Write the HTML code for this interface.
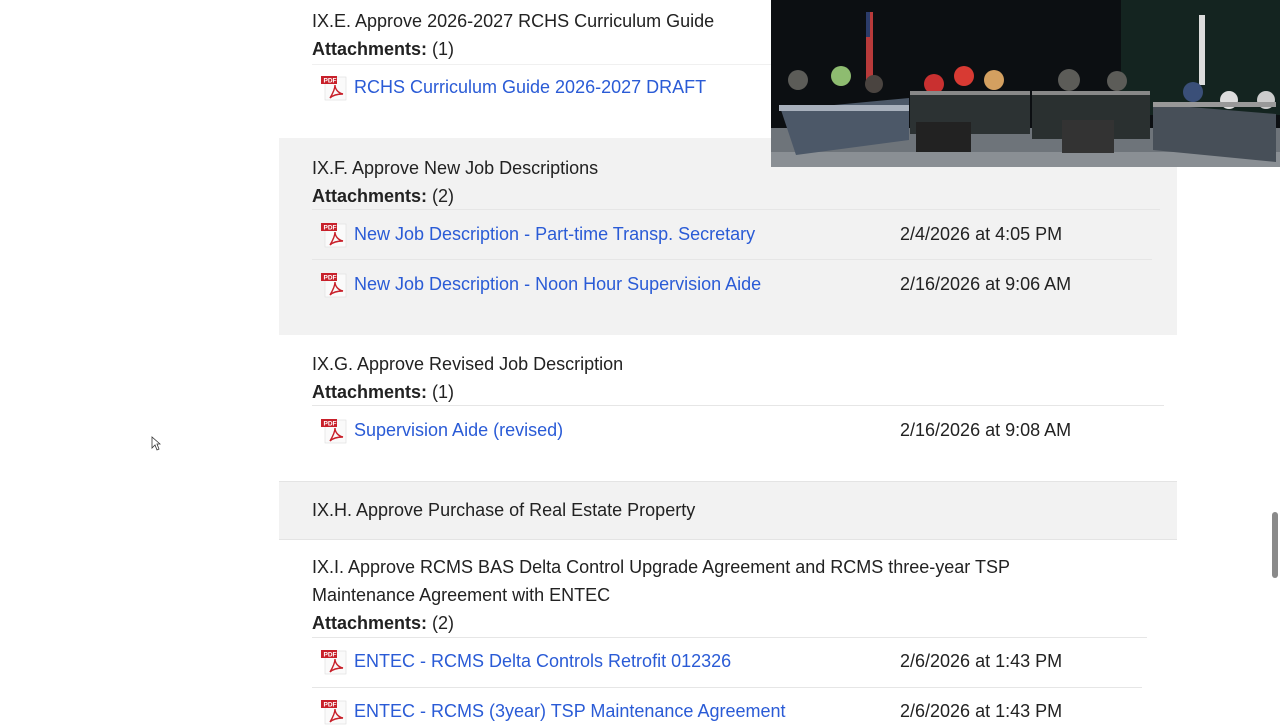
<!DOCTYPE html>
<html><head><meta charset="utf-8"><style>
body{margin:0;width:1280px;height:720px;overflow:hidden;background:#fff;font-family:"Liberation Sans",sans-serif;font-size:18px;color:#222;position:relative}
.t{position:absolute;line-height:28px;white-space:nowrap}
.a{color:#2a5bd6}
.b{font-weight:bold}
.g{position:absolute;left:279px;width:898px;background:#f2f2f2}
.l{position:absolute;height:1px;background:#e6e6e6;left:312px}
.p{position:absolute;left:321px;width:27px;height:26px}
</style></head><body>
<div class="g" style="top:138px;height:197px"></div>
<div class="g" style="top:481px;height:57px;border-top:1px solid #e4e4e4;border-bottom:1px solid #e4e4e4"></div>

<div class="l" style="top:64px;width:840px;background:#f0f0f0"></div>
<div class="l" style="top:209px;width:848px"></div>
<div class="l" style="top:259px;width:840px"></div>
<div class="l" style="top:405px;width:852px"></div>
<div class="l" style="top:637px;width:835px"></div>
<div class="l" style="top:687px;width:830px"></div>

<div class="t" style="left:312px;top:7px">IX.E. Approve 2026-2027 RCHS Curriculum Guide</div>
<div class="t" style="left:312px;top:35px"><span class="b">Attachments:</span> (1)</div>
<div class="t a" style="left:354px;top:73px">RCHS Curriculum Guide 2026-2027 DRAFT</div>

<div class="t" style="left:312px;top:154px">IX.F. Approve New Job Descriptions</div>
<div class="t" style="left:312px;top:182px"><span class="b">Attachments:</span> (2)</div>
<div class="t a" style="left:354px;top:220px">New Job Description - Part-time Transp. Secretary</div>
<div class="t" style="left:900px;top:220px">2/4/2026 at 4:05 PM</div>
<div class="t a" style="left:354px;top:270px">New Job Description - Noon Hour Supervision Aide</div>
<div class="t" style="left:900px;top:270px">2/16/2026 at 9:06 AM</div>

<div class="t" style="left:312px;top:350px">IX.G. Approve Revised Job Description</div>
<div class="t" style="left:312px;top:378px"><span class="b">Attachments:</span> (1)</div>
<div class="t a" style="left:354px;top:416px">Supervision Aide (revised)</div>
<div class="t" style="left:900px;top:416px">2/16/2026 at 9:08 AM</div>

<div class="t" style="left:312px;top:496px">IX.H. Approve Purchase of Real Estate Property</div>

<div class="t" style="left:312px;top:553px">IX.I. Approve RCMS BAS Delta Control Upgrade Agreement and RCMS three-year TSP</div>
<div class="t" style="left:312px;top:581px">Maintenance Agreement with ENTEC</div>
<div class="t" style="left:312px;top:609px"><span class="b">Attachments:</span> (2)</div>
<div class="t a" style="left:354px;top:647px">ENTEC - RCMS Delta Controls Retrofit 012326</div>
<div class="t" style="left:900px;top:647px">2/6/2026 at 1:43 PM</div>
<div class="t a" style="left:354px;top:697px">ENTEC - RCMS (3year) TSP Maintenance Agreement</div>
<div class="t" style="left:900px;top:697px">2/6/2026 at 1:43 PM</div>

<svg width="0" height="0" style="position:absolute"><defs><g id="pdf">
<rect x="4" y="2" width="21" height="23" fill="#fafafa" stroke="#ddd" stroke-width="0.6"/>
<rect x="0" y="1" width="16" height="8" fill="#c8202a"/>
<text x="2.5" y="7.5" font-size="6.5" fill="#fff" font-family="Liberation Sans" font-weight="bold">PDF</text>
<path d="M9 23 C12 18 14 14 14 10 C14 14 17 18 22 19 C17 19 12 20 9 23Z" fill="none" stroke="#c8202a" stroke-width="1.4"/>
</g></defs></svg>
<svg class="p" style="top:75px" viewBox="0 0 27 26"><use href="#pdf"/></svg>
<svg class="p" style="top:222px" viewBox="0 0 27 26"><use href="#pdf"/></svg>
<svg class="p" style="top:272px" viewBox="0 0 27 26"><use href="#pdf"/></svg>
<svg class="p" style="top:418px" viewBox="0 0 27 26"><use href="#pdf"/></svg>
<svg class="p" style="top:649px" viewBox="0 0 27 26"><use href="#pdf"/></svg>
<svg class="p" style="top:699px" viewBox="0 0 27 26"><use href="#pdf"/></svg>

<!-- video -->
<svg style="position:absolute;left:771px;top:0" width="509" height="167" viewBox="0 0 509 167">
<rect width="509" height="167" fill="#0c0f12"/>
<rect x="350" y="0" width="159" height="115" fill="#142420"/>
<rect x="0" y="128" width="509" height="39" fill="#6e747a"/>
<rect x="0" y="152" width="509" height="15" fill="#8a8f94"/>
<rect x="95" y="12" width="7" height="68" fill="#b83a3a"/>
<rect x="95" y="12" width="4" height="25" fill="#2c3c6a"/>
<rect x="428" y="15" width="6" height="70" fill="#dcdcdc"/>
<g fill="#5c5c58"><circle cx="27" cy="80" r="10"/><circle cx="70" cy="76" r="10" fill="#8ebc70"/><circle cx="103" cy="84" r="9" fill="#4a4440"/><circle cx="163" cy="84" r="10" fill="#c93030"/><circle cx="193" cy="76" r="10" fill="#d83a33"/><circle cx="223" cy="80" r="10" fill="#d4a060"/><circle cx="298" cy="80" r="11"/><circle cx="346" cy="81" r="10"/><circle cx="422" cy="92" r="10" fill="#3a4f78"/><circle cx="458" cy="100" r="9" fill="#ddd"/><circle cx="495" cy="100" r="9" fill="#ccc"/></g>
<path d="M10 110 L138 98 L138 140 L25 155 Z" fill="#4c5868"/>
<rect x="139" y="94" width="120" height="40" fill="#2c3233"/>
<rect x="261" y="94" width="118" height="45" fill="#2a3030"/>
<path d="M382 104 L505 114 L505 162 L382 150 Z" fill="#474f58"/>
<rect x="8" y="105" width="130" height="6" fill="#a8b0bc"/>
<rect x="139" y="91" width="120" height="4" fill="#888"/>
<rect x="261" y="91" width="118" height="4" fill="#888"/>
<rect x="382" y="102" width="123" height="5" fill="#999"/>
<rect x="145" y="122" width="55" height="30" fill="#222"/>
<rect x="291" y="120" width="52" height="33" fill="#333"/>
</svg>

<div style="position:absolute;left:1272px;top:512px;width:6px;height:66px;background:#8a8a8a;border-radius:3px"></div>
<svg style="position:absolute;left:151px;top:436px" width="10" height="15" viewBox="0 0 10 15"><path d="M1 1 L1 12 L4 9 L6 14 L8 13 L6 8 L9 8 Z" fill="#fff" stroke="#333" stroke-width="0.8"/></svg>
</body></html>
